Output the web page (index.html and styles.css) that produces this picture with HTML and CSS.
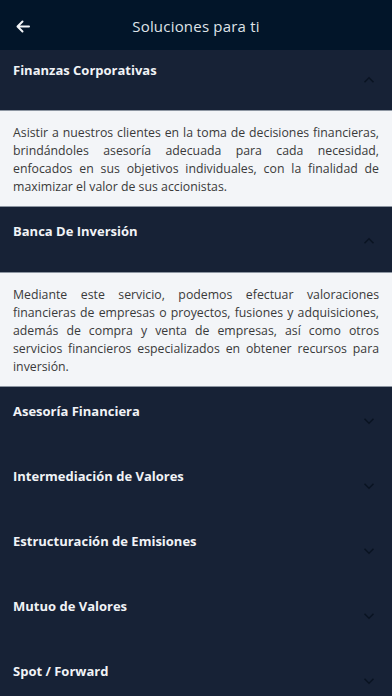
FILE: index.html
```html
<!DOCTYPE html>
<html lang="es">
<head>
<meta charset="utf-8">
<title>Soluciones para ti</title>
<link rel="stylesheet" href="styles.css">
</head>
<body>
<div class="app">
  <header class="topbar">
    <svg class="back" width="14" height="13" viewBox="0 0 14 13" aria-hidden="true">
      <path d="M13 6.5H1.8M6.5 1.5L1.5 6.5l5 5" fill="none" stroke="#f2f4f7" stroke-width="2" stroke-linecap="round" stroke-linejoin="round"/>
    </svg>
    <h1 class="title">Soluciones para ti</h1>
  </header>
  <main class="list">
    <section class="item open first">
      <div class="item-head">
        <span class="item-title">Finanzas Corporativas</span>
        <svg class="chev" width="12" height="8" viewBox="0 0 12 8"><path d="M1.5 6.2L6 1.8l4.5 4.4" fill="none" stroke="#0a1422" stroke-width="1.6"/></svg>
      </div>
      <div class="item-body">
        <p>Asistir a nuestros clientes en la toma de decisiones financieras, brindándoles asesoría adecuada para cada necesidad, enfocados en sus objetivos individuales, con la finalidad de maximizar el valor de sus accionistas.</p>
      </div>
    </section>
    <section class="item open">
      <div class="item-head">
        <span class="item-title">Banca De Inversión</span>
        <svg class="chev" width="12" height="8" viewBox="0 0 12 8"><path d="M1.5 6.2L6 1.8l4.5 4.4" fill="none" stroke="#0a1422" stroke-width="1.6"/></svg>
      </div>
      <div class="item-body">
        <p>Mediante este servicio, podemos efectuar valoraciones financieras de empresas o proyectos, fusiones y adquisiciones, además de compra y venta de empresas, así como otros servicios financieros especializados en obtener recursos para inversión.</p>
      </div>
    </section>
    <section class="item">
      <div class="item-head">
        <span class="item-title">Asesoría Financiera</span>
        <svg class="chev" width="12" height="8" viewBox="0 0 12 8"><path d="M1.5 1.8L6 6.2l4.5-4.4" fill="none" stroke="#0a1422" stroke-width="1.6"/></svg>
      </div>
    </section>
    <section class="item">
      <div class="item-head">
        <span class="item-title">Intermediación de Valores</span>
        <svg class="chev" width="12" height="8" viewBox="0 0 12 8"><path d="M1.5 1.8L6 6.2l4.5-4.4" fill="none" stroke="#0a1422" stroke-width="1.6"/></svg>
      </div>
    </section>
    <section class="item">
      <div class="item-head">
        <span class="item-title">Estructuración de Emisiones</span>
        <svg class="chev" width="12" height="8" viewBox="0 0 12 8"><path d="M1.5 1.8L6 6.2l4.5-4.4" fill="none" stroke="#0a1422" stroke-width="1.6"/></svg>
      </div>
    </section>
    <section class="item">
      <div class="item-head">
        <span class="item-title">Mutuo de Valores</span>
        <svg class="chev" width="12" height="8" viewBox="0 0 12 8"><path d="M1.5 1.8L6 6.2l4.5-4.4" fill="none" stroke="#0a1422" stroke-width="1.6"/></svg>
      </div>
    </section>
    <section class="item">
      <div class="item-head">
        <span class="item-title">Spot / Forward</span>
        <svg class="chev" width="12" height="8" viewBox="0 0 12 8"><path d="M1.5 1.8L6 6.2l4.5-4.4" fill="none" stroke="#0a1422" stroke-width="1.6"/></svg>
      </div>
    </section>
  </main>
</div>
</body>
</html>
```
FILE: styles.css
```css
* { box-sizing: border-box; }
html, body { margin: 0; padding: 0; }
body {
  background: #172236;
  font-family: "Open Sans", "DejaVu Sans", sans-serif;
  width: 392px;
  height: 696px;
  overflow: hidden;
}
.app { display: flex; flex-direction: column; height: 696px; overflow: hidden; }
.topbar {
  position: relative;
  z-index: 2;
  flex: 0 0 50px;
  height: 50px;
  background: #021529;
  display: flex;
  align-items: center;
  justify-content: center;
  padding-top: 2px;
}
.back { position: absolute; left: 16px; top: 20px; }
.title {
  margin: 0;
  font-size: 15px;
  font-weight: 400;
  color: #dfe3e8;
  letter-spacing: 0.2px;
}
.list { flex: 1; overflow: hidden; }
.item { background: #172236; }
.item-head {
  height: 65px;
  display: flex;
  justify-content: space-between;
  align-items: flex-start;
  padding: 15px 17px 0 13px;
}
.open .item-head { padding-top: 15px; }
.first .item-head { height: 60px; padding-top: 11px; }
.item-title {
  color: #f1f3f6;
  font-weight: 700;
  font-size: 13px;
  line-height: 18px;
}
.chev { margin-top: 15px; }
.item-body {
  background: #f3f5f8;
  border-top: 1px solid #8d96a2;
  border-bottom: 1px solid #8d96a2;
  padding: 13px 13px 10px 13px;
}
.item-body p {
  margin: 0;
  font-size: 12.3px;
  line-height: 18px;
  color: #3a3a3a;
  text-align: justify;
}
```
